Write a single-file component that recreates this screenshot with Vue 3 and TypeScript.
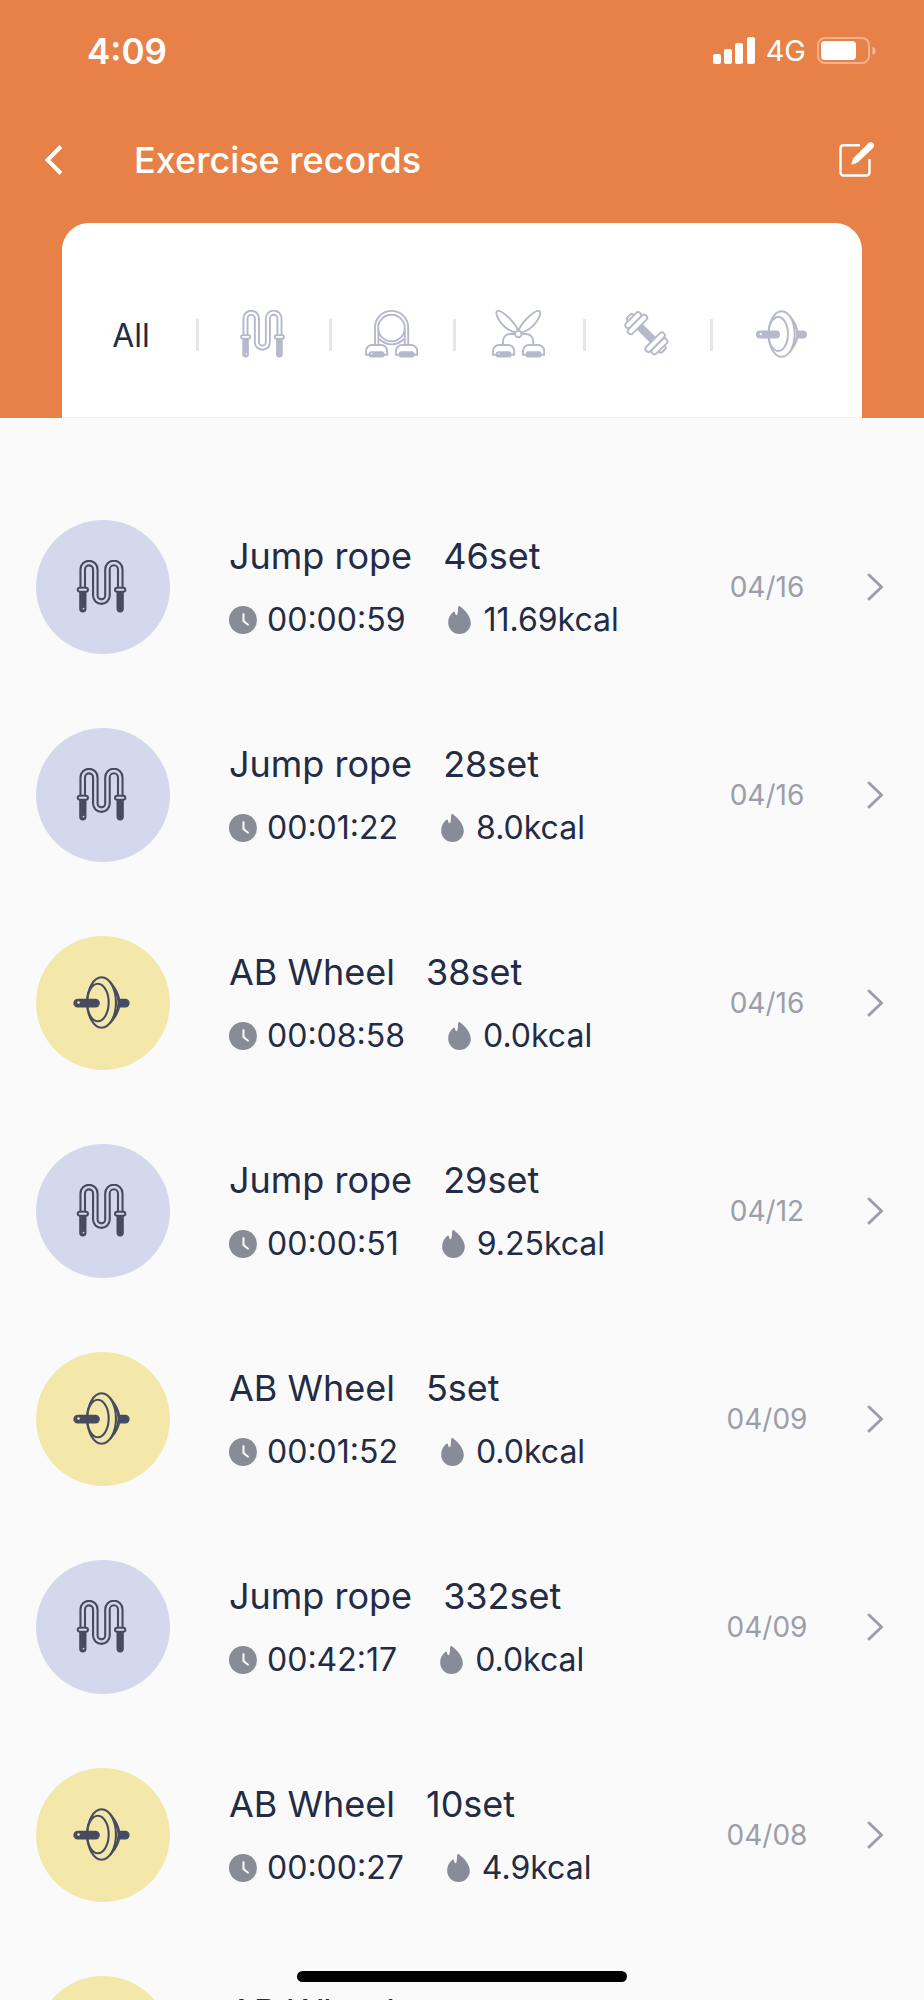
<script setup lang="ts">
type Kind = 'rope' | 'band' | 'chest' | 'dumbbell' | 'wheel'

interface ExerciseRecord {
  id: number
  kind: Kind
  name: string
  sets: string
  time: string
  kcal: string
  date: string
}

const tabs: { kind: Kind; label: string }[] = [
  { kind: 'rope', label: 'Jump rope' },
  { kind: 'band', label: 'Resistance band' },
  { kind: 'chest', label: 'Chest expander' },
  { kind: 'dumbbell', label: 'Dumbbell' },
  { kind: 'wheel', label: 'AB Wheel' },
]

const records: ExerciseRecord[] = [
  { id: 1, kind: 'rope', name: 'Jump rope', sets: '46set', time: '00:00:59', kcal: '11.69kcal', date: '04/16' },
  { id: 2, kind: 'rope', name: 'Jump rope', sets: '28set', time: '00:01:22', kcal: '8.0kcal', date: '04/16' },
  { id: 3, kind: 'wheel', name: 'AB Wheel', sets: '38set', time: '00:08:58', kcal: '0.0kcal', date: '04/16' },
  { id: 4, kind: 'rope', name: 'Jump rope', sets: '29set', time: '00:00:51', kcal: '9.25kcal', date: '04/12' },
  { id: 5, kind: 'wheel', name: 'AB Wheel', sets: '5set', time: '00:01:52', kcal: '0.0kcal', date: '04/09' },
  { id: 6, kind: 'rope', name: 'Jump rope', sets: '332set', time: '00:42:17', kcal: '0.0kcal', date: '04/09' },
  { id: 7, kind: 'wheel', name: 'AB Wheel', sets: '10set', time: '00:00:27', kcal: '4.9kcal', date: '04/08' },
  { id: 8, kind: 'wheel', name: 'AB Wheel', sets: '', time: '', kcal: '', date: '' },
]
</script>

<template>
  <div class="screen">
    <svg class="symbols" aria-hidden="true">
      <symbol id="rope" viewBox="0 0 45 48">
        <path class="cord" d="M5.5 25V8.5a5.7 5.7 0 0 1 11.4 0V32.2a5.5 5.5 0 0 0 11 0V8.5a5.8 5.8 0 0 1 11.6 0V25" />
        <path class="cord-core" d="M5.5 25V8.5a5.7 5.7 0 0 1 11.4 0V32.2a5.5 5.5 0 0 0 11 0V8.5a5.8 5.8 0 0 1 11.6 0V25" />
        <path class="solid" d="M2.3 28h6.6v16.2a3.3 3.3 0 0 1-6.6 0zM36.1 28h6.6v16.2a3.3 3.3 0 0 1-6.6 0z" />
        <rect class="plate" x="1" y="25.1" width="9.2" height="3.6" rx="1.8" />
        <rect class="plate" x="34.8" y="25.1" width="9.2" height="3.6" rx="1.8" />
        <circle class="hole" cx="6.2" cy="44" r="0.8" />
      </symbol>
      <symbol id="band" viewBox="0 0 53 48">
        <circle class="line" cx="26.5" cy="18" r="13.3" />
        <path class="line" d="M10 35V17.5a16.6 16.6 0 0 1 33.2 0V35M13.4 35V20M39.8 35V20M14.4 29a16.6 16.6 0 0 0 24.4 0" />
        <path class="line" d="M4 44.8H1V41a6 6 0 0 1 6-6h9.2a6 6 0 0 1 6 6v3.8H19M34 44.8h-3V41a6 6 0 0 1 6-6h9.2a6 6 0 0 1 6 6v3.8H49" />
        <rect class="solid" x="3.8" y="41.2" width="15.6" height="6.4" rx="2.6" />
        <rect class="solid" x="33.8" y="41.2" width="15.6" height="6.4" rx="2.6" />
        <circle class="hole" cx="6.8" cy="43.8" r="0.8" />
      </symbol>
      <symbol id="chest" viewBox="0 0 53 48">
        <path class="line" d="M26 20.5C22.5 11 8.5-1 5 1.3C2 4 10.5 20 24 22.8M26.6 20.5C30 11 44 -1 47.6 1.3C50.6 4 42 20 28.6 22.8" />
        <path class="line" d="M22.8 24h-4.800a7 7 0 0 0-7 7v4M29.800 24h4.400a7 7 0 0 1 7 7v4" />
        <circle class="plate" cx="26.3" cy="24" r="3.3" />
        <path class="line" d="M4 44.8H1V41a6 6 0 0 1 6-6h9.2a6 6 0 0 1 6 6v3.8H19M34 44.8h-3V41a6 6 0 0 1 6-6h9.2a6 6 0 0 1 6 6v3.8H49" />
        <rect class="solid" x="3.8" y="41.2" width="15.6" height="6.4" rx="2.6" />
        <rect class="solid" x="33.8" y="41.2" width="15.6" height="6.4" rx="2.6" />
        <circle class="hole" cx="6.8" cy="43.8" r="0.8" />
      </symbol>
      <symbol id="dumbbell" viewBox="0 0 45 45">
        <g transform="translate(22.3 22.3) rotate(45)">
          <rect class="solid" x="-10" y="-4" width="20" height="8" />
          <rect class="plate" x="-24.5" y="-4" width="5" height="8" rx="2" />
          <rect class="plate" x="19.5" y="-4" width="5" height="8" rx="2" />
          <rect class="plate" x="-21.5" y="-10" width="6" height="20" rx="3" />
          <rect class="plate" x="15.5" y="-10" width="6" height="20" rx="3" />
          <rect class="plate" x="-15.5" y="-12.5" width="6" height="25" rx="3" />
          <rect class="plate" x="9.5" y="-12.5" width="6" height="25" rx="3" />
        </g>
      </symbol>
      <symbol id="wheel" viewBox="0 0 51 48">
        <path class="line rim" d="M33 5.500C38 12 41.300 17 41.300 24.300S38 36.500 33 42.500" />
        <ellipse class="plate" cx="25.6" cy="24" rx="13" ry="22.8" />
        <ellipse class="line" cx="22.2" cy="24" rx="9.8" ry="17" />
        <path class="solid" d="M41 20.500h6a4 4 0 0 1 0 8h-6z" />
        <rect class="solid" x="0" y="20.5" width="24" height="8" rx="4" />
        <circle class="hole" cx="4.700" cy="24" r="1.2" />
      </symbol>
    </svg>

    <header class="header">
      <div class="status">
        <span class="clock">4:09</span>
        <div class="status-icons">
          <svg class="signal" viewBox="0 0 42 27" aria-hidden="true">
            <rect x="0" y="17" width="8" height="10" rx="2" />
            <rect x="11" y="12" width="8" height="15" rx="2" />
            <rect x="22" y="6" width="8" height="21" rx="2" />
            <rect x="34" y="0" width="8" height="27" rx="2" />
          </svg>
          <span class="network">4G</span>
          <svg class="battery" viewBox="0 0 59 27" aria-hidden="true">
            <rect class="battery-shell" x="1" y="1" width="51" height="25" rx="7" />
            <path class="battery-cap" d="M55.5 9.5a4.5 4.5 0 0 1 0 8.5z" />
            <rect x="4" y="4" width="35" height="19" rx="4" />
          </svg>
        </div>
      </div>

      <div class="nav">
        <button class="back" type="button" aria-label="Back">
          <svg viewBox="0 0 18 30" aria-hidden="true"><path d="M16 1.5 2.5 15 16 28.5" /></svg>
        </button>
        <h1 class="title">Exercise records</h1>
        <button class="edit" type="button" aria-label="Edit">
          <svg viewBox="0 0 36 36" aria-hidden="true">
            <path class="sheet" d="M20 3.3H4.5A3 3 0 0 0 1.5 6.3V30.5A3 3 0 0 0 4.5 33.5H27.5A3 3 0 0 0 30.5 30.5V18" />
            <path class="pencil" d="M29.3 1.2a3.3 3.3 0 0 1 4.7 4.7L18.7 20.6 13.5 22.4a.8.8 0 0 1-1-1L14.3 16.3z" />
          </svg>
        </button>
      </div>

      <ul class="tabs">
        <li class="tab">
          <button class="tab-button all" type="button">All</button>
        </li>
        <li v-for="tab in tabs" :key="tab.kind" class="tab">
          <button class="tab-button" type="button" :aria-label="tab.label">
            <svg class="tab-icon" :class="tab.kind"><use :href="`#${tab.kind}`" /></svg>
          </button>
        </li>
      </ul>
    </header>

    <ul class="records">
      <li v-for="record in records" :key="record.id">
        <a class="record" href="#">
          <span class="badge" :class="`badge-${record.kind}`">
            <svg class="badge-icon"><use :href="`#${record.kind}`" /></svg>
          </span>
          <span class="details">
            <span class="headline">
              <span>{{ record.name }}</span>
              <span>{{ record.sets }}</span>
            </span>
            <span class="stats">
              <svg class="time-icon" viewBox="0 0 28 28" aria-hidden="true">
                <circle cx="14" cy="14" r="14" />
                <path d="M14.5 8v7l4.500 3.700" />
              </svg>
              <span class="time">{{ record.time }}</span>
              <svg class="flame-icon" viewBox="0 0 23 28" aria-hidden="true">
                <path d="M10.200.8C10.500 0 11.500-.2 12.200.400C16 3.500 22.800 9.500 22.800 16.700A11.300 11.300 0 0 1 .2 16.700C.2 11.800 2.500 8 5.500 5.800C6.200 5.300 6.800 5.800 7 6.500L7.500 8.600C7.700 9.600 9 9.600 9.300 8.600C10.200 6.300 9.900 3 10.200.8z" />
              </svg>
              <span>{{ record.kcal }}</span>
            </span>
          </span>
          <span class="date">{{ record.date }}</span>
          <svg class="chevron" viewBox="0 0 17 28" aria-hidden="true"><path d="M2 2l12.500 12L2 26" /></svg>
        </a>
      </li>
    </ul>

    <div class="home-indicator"></div>
  </div>
</template>

<style>
body {
  margin: 0;
  background: #fafafa;
}
</style>

<style scoped>
.screen {
  position: relative;
  height: 100vh;
  overflow: hidden;
  background: #fafafa;
  color: #232b45;
  font-family: Inter, "Liberation Sans", sans-serif;
}

.symbols {
  position: absolute;
  width: 0;
  height: 0;
}

.line,
.plate {
  fill: none;
  stroke: currentColor;
  stroke-width: 1.9px;
}

.rim {
  stroke-width: 2.6px;
}

.plate {
  fill: var(--surface);
}

.solid {
  fill: currentColor;
}

.hole {
  fill: var(--surface);
}

.cord {
  fill: none;
  stroke: currentColor;
  stroke-width: 6px;
}

.cord-core {
  fill: none;
  stroke: var(--surface);
  stroke-width: 2.2px;
}

button {
  padding: 0;
  border: 0;
  background: none;
  color: inherit;
  font: inherit;
  cursor: pointer;
}

ul {
  margin: 0;
  padding: 0;
  list-style: none;
}

.header {
  background: #e88147;
  color: #fff;
}

.status {
  display: flex;
  align-items: center;
  justify-content: space-between;
  height: 101px;
  padding: 0 48px 0 87px;
}

.clock {
  font-size: 35px;
  font-weight: 600;
}

.status-icons {
  display: flex;
  align-items: center;
  gap: 11px;
}

.signal {
  width: 42px;
  height: 27px;
  fill: #fff;
}

.network {
  font-size: 29px;
}

.battery {
  width: 59px;
  height: 27px;
  fill: #fff;
}

.battery-shell {
  fill: none;
  stroke: rgb(255 255 255 / 40%);
  stroke-width: 2px;
}

.battery-cap {
  fill: rgb(255 255 255 / 45%);
}

.nav {
  display: flex;
  align-items: center;
  height: 118px;
  padding: 0 49px 4px 45px;
}

.back,
.edit {
  display: flex;
}

.back svg {
  width: 18px;
  height: 30px;
  fill: none;
  stroke: #fff;
  stroke-width: 4px;
}

.title {
  flex: 1;
  margin: 0 0 0 71px;
  font-size: 36px;
  font-weight: 500;
}

.edit svg {
  width: 36px;
  height: 36px;
}

.sheet {
  fill: none;
  stroke: #fff;
  stroke-width: 2.4px;
  stroke-linecap: round;
}

.pencil {
  fill: #fff;
}

.tabs {
  --surface: #fff;
  display: grid;
  grid-template-columns: 137fr 133fr 124fr 130fr 127fr 149fr;
  align-items: center;
  height: 194px;
  margin: 0 62px;
  border-bottom: 1px solid #fbeee7;
  border-radius: 27px 27px 0 0;
  background: #fff;
  color: #b5b9ca;
}

.tab {
  display: flex;
  align-items: center;
  padding-top: 30px;
}

.tab:not(:last-child)::after {
  content: "";
  width: 3px;
  height: 32px;
  background: #e6e6e6;
}

.tab:last-child {
  padding-right: 10px;
}

.tab-button {
  display: flex;
  flex: 1;
  align-items: center;
  justify-content: center;
  height: 60px;
  padding: 0 3px 3px 0;
}

.all {
  padding: 0 0 0 4px;
  color: #232b45;
  font-size: 32px;
}

.tab-icon {
  width: 53px;
  height: 48px;
}

.tab-icon.dumbbell {
  width: 45px;
  height: 45px;
}

.records {
  padding-top: 65px;
}

.record {
  display: flex;
  align-items: center;
  height: 208px;
  padding: 0 40px 0 36px;
  color: inherit;
  text-decoration: none;
}

.badge {
  display: flex;
  flex: none;
  align-items: center;
  justify-content: center;
  box-sizing: border-box;
  width: 134px;
  height: 134px;
  padding: 0 3px 2px 0;
  border-radius: 50%;
  background: var(--surface);
  color: #474b60;
}

.badge-rope {
  --surface: #d3d8ed;
}

.badge-wheel {
  --surface: #f3e8a9;
}

.badge-icon {
  width: 57px;
  height: 53px;
}

.details {
  display: flex;
  flex: 1;
  flex-direction: column;
  gap: 22px;
  margin-left: 59px;
}

.headline {
  display: flex;
  gap: 31px;
  min-height: 44px;
  font-size: 36px;
  line-height: 44px;
}

.stats {
  display: flex;
  align-items: center;
  min-height: 40px;
  font-size: 32px;
  line-height: 40px;
}

.time-icon {
  width: 28px;
  height: 28px;
  margin-right: 10px;
  fill: #888c98;
}

.time-icon path {
  fill: none;
  stroke: #fafafa;
  stroke-width: 2px;
  stroke-linecap: round;
}

.time {
  margin-right: 43px;
}

.flame-icon {
  width: 23px;
  height: 28px;
  margin-right: 12px;
  fill: #888c98;
}

.date {
  width: 120px;
  color: #9c9ea9;
  font-size: 28px;
  text-align: center;
}

.chevron {
  width: 17px;
  height: 28px;
  margin-left: 40px;
  fill: none;
  stroke: #9c9ea9;
  stroke-width: 3px;
  stroke-linecap: round;
  stroke-linejoin: round;
}

.home-indicator {
  position: absolute;
  bottom: 18px;
  left: 50%;
  width: 330px;
  height: 11px;
  border-radius: 6px;
  background: #000;
  transform: translateX(-50%);
}
</style>
